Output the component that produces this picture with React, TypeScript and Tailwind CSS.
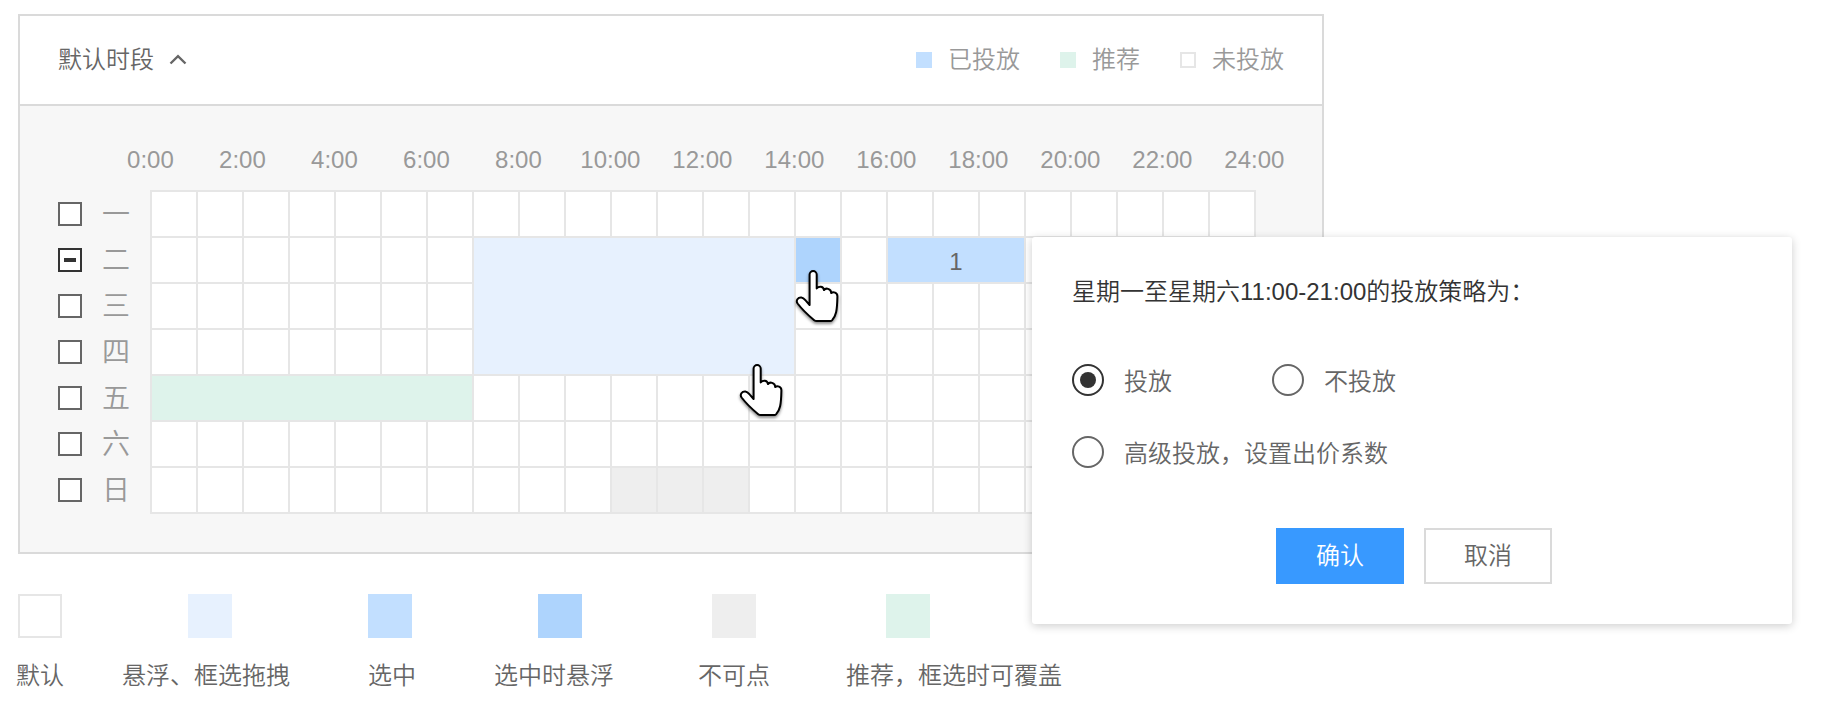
const FONT = "font-['Liberation_Sans','Noto_Sans_CJK_SC',sans-serif]";

type Fill = { col: string; row: string; color: string; text?: string };

const fills: Fill[] = [
  { col: 'col-[8/15]', row: 'row-[2/5]', color: 'bg-[#e7f1fe]' },
  { col: 'col-[15/16]', row: 'row-[2/3]', color: 'bg-[#aed4fd]' },
  { col: 'col-[17/20]', row: 'row-[2/3]', color: 'bg-[#c2dfff]', text: '1' },
  { col: 'col-[1/8]', row: 'row-[5/6]', color: 'bg-[#def3eb]' },
  { col: 'col-[11/12]', row: 'row-[7/8]', color: 'bg-[#eeeeee]' },
  { col: 'col-[12/13]', row: 'row-[7/8]', color: 'bg-[#eeeeee]' },
  { col: 'col-[13/14]', row: 'row-[7/8]', color: 'bg-[#eeeeee]' },
];

const hours = Array.from({ length: 13 }, (_, i) => `${i * 2}:00`);
const days = ['一', '二', '三', '四', '五', '六', '日'];

const states = [
  { label: '默认', box: 'ml-0.5 border-2 border-[#e6e6e6]', cell: 'ml-4' },
  { label: '悬浮、框选拖拽', box: 'ml-[66px] bg-[#e7f1fe]', cell: 'ml-[58px]' },
  { label: '选中', box: 'bg-[#c2dfff]', cell: 'ml-[78px]' },
  { label: '选中时悬浮', box: 'ml-11 bg-[#aed4fd]', cell: 'ml-[78px]' },
  { label: '不可点', box: 'ml-3.5 bg-[#eeeeee]', cell: 'ml-[84px]' },
  { label: '推荐，框选时可覆盖', box: 'ml-10 bg-[#def3eb]', cell: 'ml-[76px]' },
];

function Hand({ className }: { className: string }) {
  return (
    <svg
      className={`absolute z-10 h-[60px] w-[50px] overflow-visible drop-shadow-[0_2px_1.5px_rgba(0,0,0,0.45)] ${className}`}
      viewBox="0 0 50 60"
      fill="#fff"
      stroke="#000"
      strokeWidth="2"
      strokeLinejoin="round"
    >
      <path d="M14.600 36V5.600a3.550 3.550 0 0 1 7.100 0V19.400C23.500 17.400 28.300 16.600 29 21.100C30.600 18.600 36 19.300 36.300 24.100C38.200 22.300 42.400 23.600 42.400 27.300C42.300 32.500 42.200 38.500 41.100 43.300C40.400 46.500 38.600 49.700 37 51.400C36.500 51.900 36 52.100 35.300 52.100H21.800C20.800 52.100 20 51.900 19.200 51.200C13.500 46.500 7 40.300 2.600 34.500C0.500 31.600 3 28.200 6.300 28.400C8.600 28.600 9.700 30.300 11 31.900Z" />
    </svg>
  );
}

function Legend({ color, label }: { color: string; label: string }) {
  return (
    <div className="flex items-center gap-4">
      <span className={`size-4 ${color}`} />
      <span>{label}</span>
    </div>
  );
}

function Radio({ label, checked }: { label: string; checked?: boolean }) {
  return (
    <div className="flex h-8 items-start gap-5 whitespace-nowrap">
      <span
        className={`flex size-8 items-center justify-center rounded-full border-2 ${checked ? 'border-[#333]' : 'border-[#666]'}`}
      >
        {checked && <span className="size-4 rounded-full bg-[#333]" />}
      </span>
      <span className="pt-0.5">{label}</span>
    </div>
  );
}

export default function App() {
  return (
    <div className={`relative h-[712px] w-[1832px] overflow-hidden bg-white pt-3.5 text-2xl leading-8 font-[350] text-[#666] ${FONT}`}>
      <section className="ml-[18px] h-[540px] w-[1306px] border-2 border-[#dadada] bg-[#f7f7f7]">
        <header className="flex h-[90px] items-center justify-between border-b-2 border-[#dadada] bg-white pr-[38px] pl-[38px]">
          <div className="flex items-center gap-[15px]">
            <span>默认时段</span>
            <svg className="h-3 w-[18px]" viewBox="0 0 18 12" fill="none" stroke="#666" strokeWidth="2.4">
              <path d="M1.500 9.500L9 2.100L16.500 9.500" />
            </svg>
          </div>
          <div className="flex gap-10 text-[#999]">
            <Legend color="bg-[#c2dfff]" label="已投放" />
            <Legend color="bg-[#def3eb]" label="推荐" />
            <Legend color="border-2 border-[#e6e6e6]" label="未投放" />
          </div>
        </header>

        <div className="flex h-[84px] pt-[38px] pl-[84.4px] text-[#999]">
          {hours.map((h) => (
            <span key={h} className="w-[92px] shrink-0 text-center">{h}</span>
          ))}
        </div>

        <div className="flex pl-[38px]">
          <div className="w-[92px] pt-px">
            {days.map((d, i) => (
              <div key={d} className="flex h-[46px] items-center gap-5 text-[28px] text-[#999]">
                <span
                  className={`flex size-6 items-center justify-center border-2 bg-white ${i === 1 ? 'border-[#333]' : 'border-[#666]'}`}
                >
                  {i === 1 && <span className="h-1 w-3 bg-[#333]" />}
                </span>
                <span className="pt-0.5">{d}</span>
              </div>
            ))}
          </div>
          <div className="grid h-[324px] w-[1106px] grid-cols-[repeat(24,44px)] grid-rows-[repeat(7,44px)] gap-0.5 border-2 border-[#e6e6e6] bg-[#e6e6e6]">
            {Array.from({ length: 168 }, (_, i) => (
              <span
                key={i}
                className="bg-white"
                style={{ gridColumn: (i % 24) + 1, gridRow: Math.floor(i / 24) + 1 }}
              />
            ))}
            {fills.map((f) => (
              <span key={f.col + f.row} className={`z-[1] flex items-center justify-center pt-1 ${f.col} ${f.row} ${f.color}`}>
                {f.text}
              </span>
            ))}
          </div>
        </div>
      </section>

      <div className="flex pt-10 whitespace-nowrap">
        {states.map((s) => (
          <div key={s.label} className={s.cell}>
            <div className={`size-11 ${s.box}`} />
            <div className="pt-[22px]">{s.label}</div>
          </div>
        ))}
      </div>

      <Hand className="top-[269px] left-[795px]" />
      <Hand className="top-[363px] left-[739px]" />

      <div className="absolute top-[237px] left-[1032px] z-10 h-[387px] w-[760px] rounded-[3px] bg-white px-10 pt-[39px] shadow-[0_2px_10px_rgba(0,0,0,0.2)]">
        <h2 className="text-[#333]">星期一至星期六11:00-21:00的投放策略为：</h2>
        <div className="flex flex-col gap-10 pt-14">
          <div className="flex">
            <div className="w-[200px]">
              <Radio label="投放" checked />
            </div>
            <Radio label="不投放" />
          </div>
          <Radio label="高级投放，设置出价系数" />
        </div>
        <div className="flex justify-center gap-5 pt-[60px] pl-1">
          <button className="h-14 w-32 bg-[#3899ff] text-white">确认</button>
          <button className="h-14 w-32 border-2 border-[#dadada]">取消</button>
        </div>
      </div>
    </div>
  );
}
